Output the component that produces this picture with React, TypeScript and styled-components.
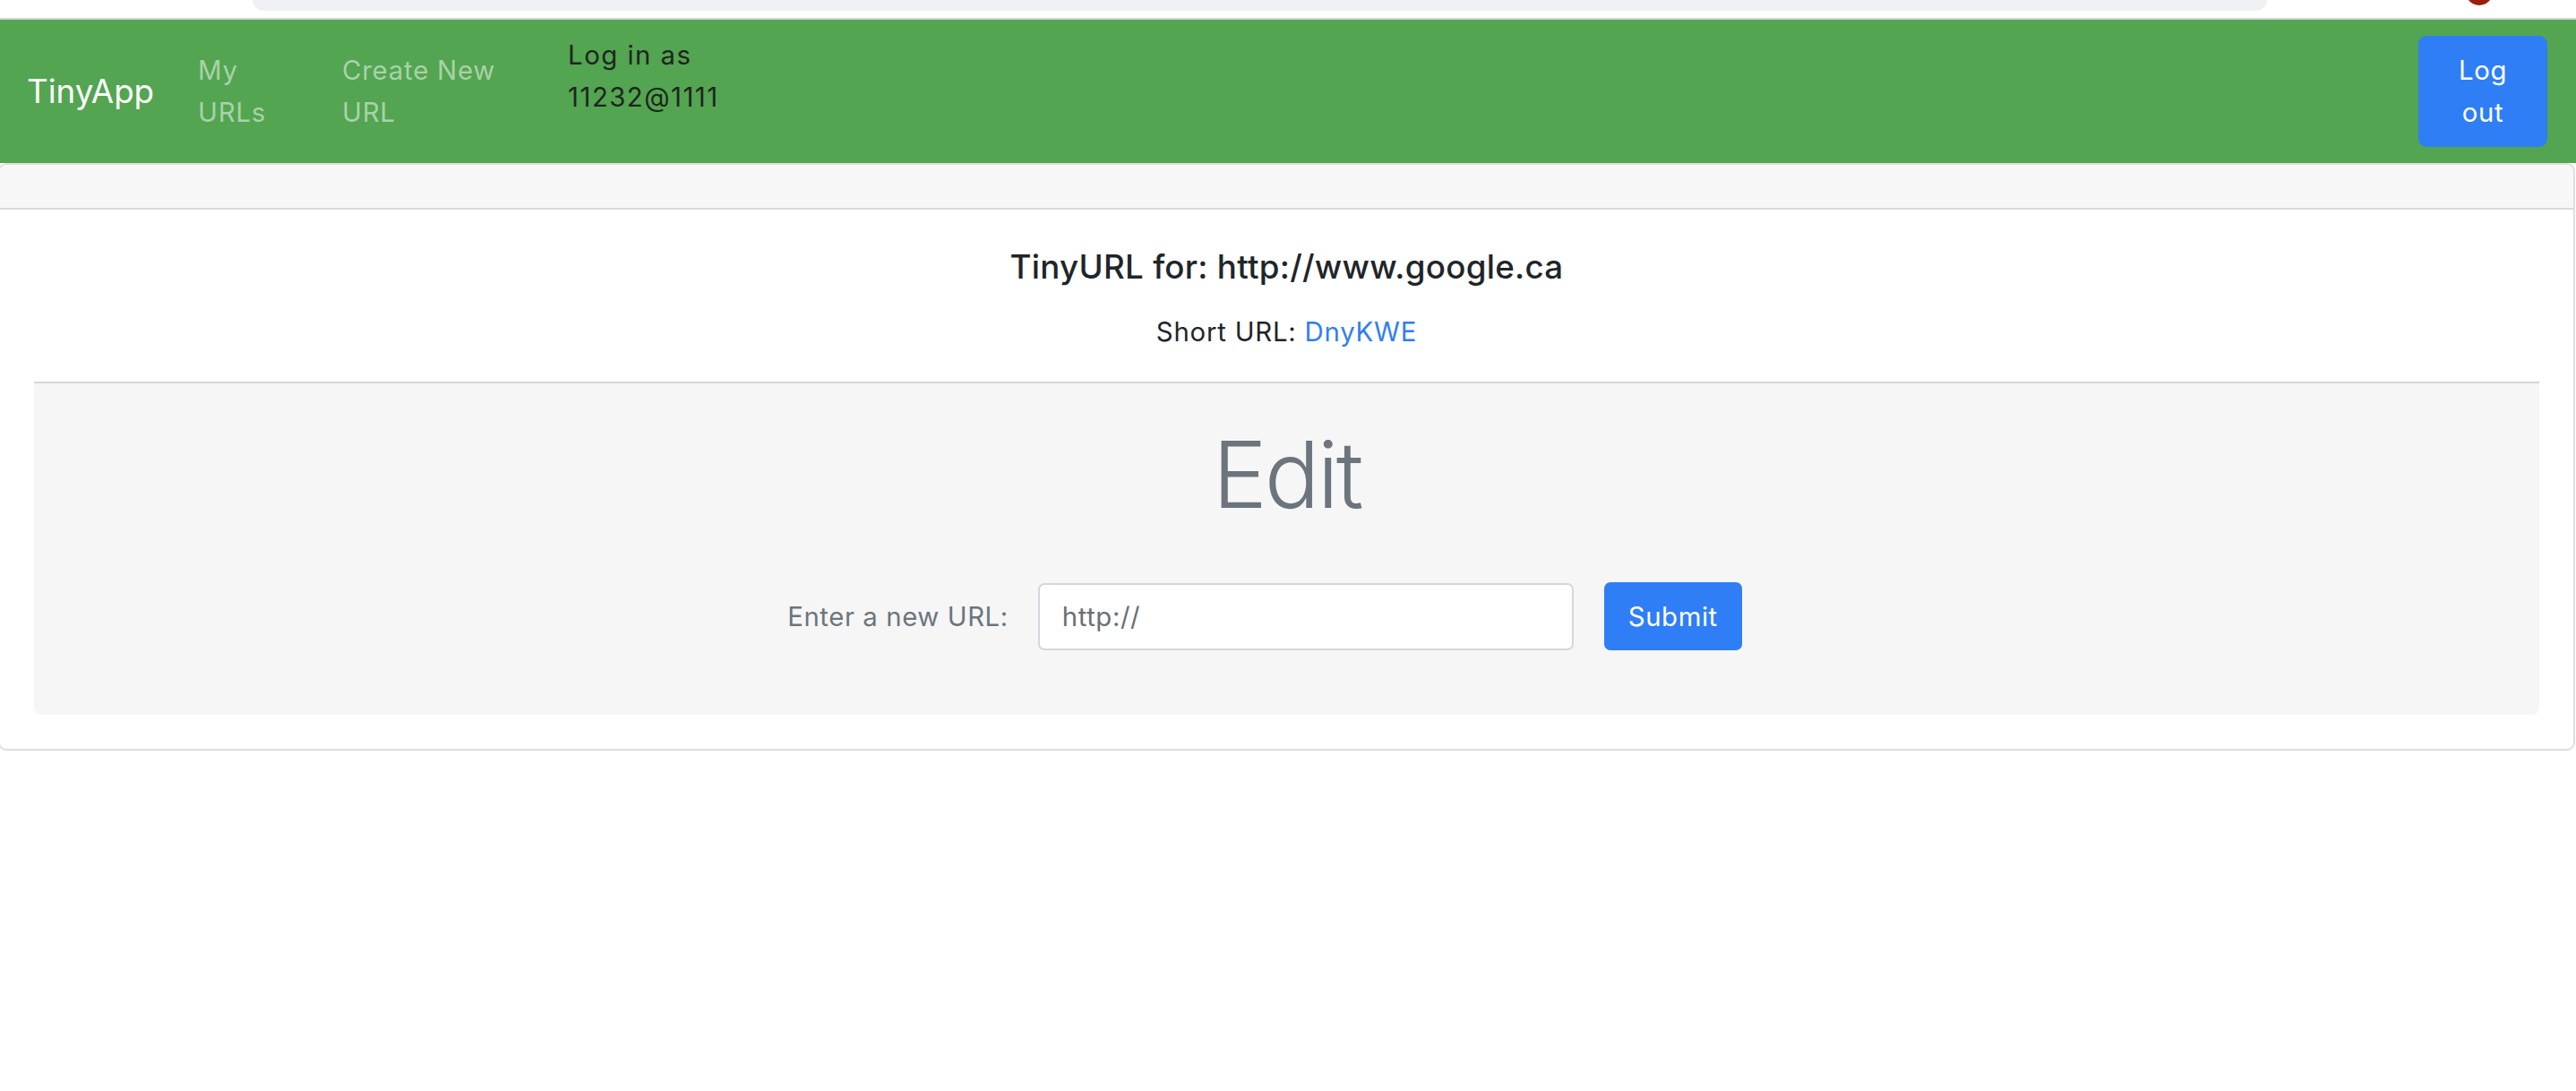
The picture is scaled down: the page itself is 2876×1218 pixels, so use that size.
import React from "react";
import styled, { createGlobalStyle } from "styled-components";

const GlobalStyle = createGlobalStyle`
  html, body {
    margin: 0;
    padding: 0;
    background: #ffffff;
    font-family: Inter, "Noto Sans", Roboto, sans-serif;
    color: #212529;
    overflow: hidden;
  }
  * { box-sizing: border-box; }
`;

const Chrome = styled.div`
  height: 22px;
  display: flex;
  align-items: flex-start;
  padding-left: 282px;
  border-bottom: 2px solid #d4d4d4;
  background: #ffffff;
  overflow: hidden;
`;

const AddressPill = styled.div`
  width: 2249px;
  height: 12px;
  background: #f0f1f4;
  border-radius: 0 0 24px 24px;
`;

const Avatar = styled.div`
  width: 30px;
  height: 30px;
  margin-left: 222px;
  margin-top: -24px;
  border-radius: 50%;
  background: radial-gradient(circle at 40% 30%, #2f4a2c 0 18%, #9b1c10 20% 100%);
`;

const Navbar = styled.nav`
  height: 160px;
  background: #53a551;
  display: flex;
  align-items: center;
  padding: 0 32px 0 30px;
`;

const Brand = styled.a`
  font-size: 36.7px;
  line-height: 44px;
  color: #ffffff;
  margin-right: 49px;
  white-space: nowrap;
`;

const NavItem = styled.div<{ $width?: number; $lift?: number }>`
  width: ${(p) => (p.$width ? `${p.$width}px` : "auto")};
  padding-bottom: ${(p) => p.$lift ?? 0}px;
  display: flex;
  align-items: center;
`;

const NavLink = styled.a<{ $max: number; $dark?: boolean }>`
  max-width: ${(p) => p.$max}px;
  font-size: 29.3px;
  line-height: 47px;
  color: ${(p) => (p.$dark ? "#1e261e" : "#a9d2a8")};
  letter-spacing: ${(p) => (p.$dark ? "1.5px" : "0.8px")};
`;

const LogoutButton = styled.button`
  margin-left: auto;
  width: 144px;
  height: 124px;
  border: none;
  border-radius: 9px;
  background: #2f7ef6;
  color: #ffffff;
  font-family: inherit;
  font-size: 29.3px;
  line-height: 47px;
  letter-spacing: 0.6px;
  padding: 0 34px;
`;

const Card = styled.section`
  margin: 0 1px 0 -2px;
  border: 2px solid #dedede;
  border-radius: 9px;
  overflow: hidden;
`;

const CardHeader = styled.div`
  height: 50px;
  background: #f7f7f7;
  border-bottom: 2px solid #d9d9d9;
`;

const CardBody = styled.div`
  padding: 42px 38px 38px 38px;
  text-align: center;
`;

const Title = styled.h5`
  margin: 0 0 29px 0;
  font-size: 36.7px;
  line-height: 44px;
  font-weight: 500;
  color: #212529;
  letter-spacing: 0.3px;
`;

const ShortLine = styled.p`
  margin: 0 0 33px 0;
  font-size: 29.3px;
  line-height: 44px;
  letter-spacing: 0.8px;
`;

const ShortLink = styled.a`
  color: #2f7ef6;
  text-decoration: none;
`;

const Jumbotron = styled.div`
  background: #f6f6f6;
  border-top: 2px solid #d6d6d6;
  border-radius: 0 0 8px 8px;
  padding: 41px 0 72px 0;
`;

const Heading = styled.h1`
  margin: 0 0 58px 0;
  font-size: 102.7px;
  line-height: 123px;
  font-weight: 300;
  color: #6c757d;
  letter-spacing: -3px;
`;

const FormRow = styled.form`
  display: flex;
  justify-content: center;
  align-items: center;
  padding-right: 49px;
`;

const Label = styled.label`
  font-size: 29.3px;
  color: #6c757d;
  margin-right: 33px;
  letter-spacing: 0.6px;
`;

const Input = styled.input`
  width: 598px;
  height: 75px;
  border: 2px solid #d3d7dc;
  border-radius: 7px;
  background: #ffffff;
  padding: 0 25px;
  font-family: inherit;
  font-size: 29.3px;
  letter-spacing: 0.6px;
  color: #6a6f76;
  margin-right: 34px;
  outline: none;
`;

const SubmitButton = styled.button`
  width: 154px;
  height: 76px;
  border: none;
  border-radius: 7px;
  background: #2f7ef6;
  color: #ffffff;
  font-family: inherit;
  font-size: 29.3px;
  letter-spacing: 0.6px;
  padding: 0;
`;

export default function App() {
  return (
    <>
      <GlobalStyle />
      <Chrome>
        <AddressPill />
        <Avatar />
      </Chrome>
      <Navbar>
        <Brand>TinyApp</Brand>
        <NavItem $width={161}>
          <NavLink $max={90}>My URLs</NavLink>
        </NavItem>
        <NavItem $width={252}>
          <NavLink $max={200}>Create New URL</NavLink>
        </NavItem>
        <NavItem $lift={34}>
          <NavLink $max={200} $dark>
            Log in as 11232@1111
          </NavLink>
        </NavItem>
        <LogoutButton>Log out</LogoutButton>
      </Navbar>
      <Card>
        <CardHeader />
        <CardBody>
          <Title>TinyURL for: http://www.google.ca</Title>
          <ShortLine>
            Short URL: <ShortLink href="#">DnyKWE</ShortLink>
          </ShortLine>
          <Jumbotron>
            <Heading>Edit</Heading>
            <FormRow onSubmit={(e) => e.preventDefault()}>
              <Label>Enter a new URL:</Label>
              <Input defaultValue="http://" />
              <SubmitButton type="submit">Submit</SubmitButton>
            </FormRow>
          </Jumbotron>
        </CardBody>
      </Card>
    </>
  );
}
